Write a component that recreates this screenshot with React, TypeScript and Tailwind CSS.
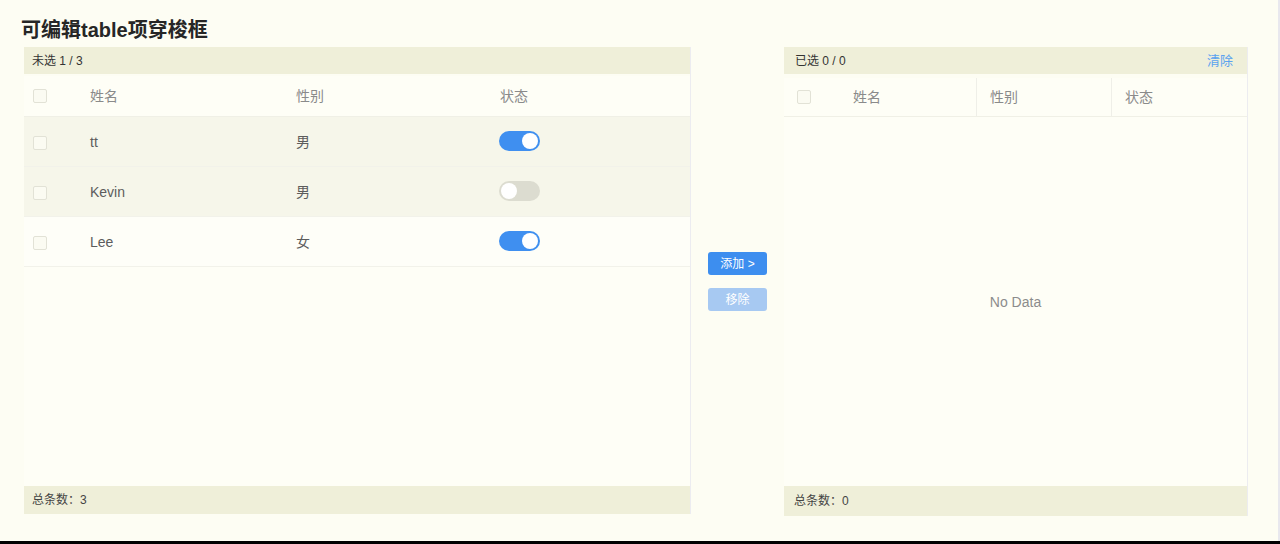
import { useState } from 'react'

type Row = { name: string; sex: string; on: boolean }

const font = { fontFamily: '"Liberation Sans", "Noto Sans CJK SC", sans-serif' }

function Switch({ on, onClick }: { on: boolean; onClick: () => void }) {
  return (
    <button
      onClick={onClick}
      className={`relative inline-flex h-[20px] w-[41px] items-center rounded-full ${on ? 'bg-[#3f8ff0]' : 'bg-[#dcdcd0]'}`}
    >
      <span
        className={`inline-block h-[16px] w-[16px] rounded-full bg-white ${on ? 'translate-x-[23px]' : 'translate-x-[2px]'}`}
      ></span>
    </button>
  )
}

function Checkbox() {
  return <span className="inline-block h-[14px] w-[14px] rounded-[2px] border border-[#e2e2d6] bg-[#fbfbf2]"></span>
}

export default function App() {
  const [rows, setRows] = useState<Row[]>([
    { name: 'tt', sex: '男', on: true },
    { name: 'Kevin', sex: '男', on: false },
    { name: 'Lee', sex: '女', on: true },
  ])

  const toggle = (i: number) => {
    setRows(rows.map((r, j) => (j === i ? { ...r, on: !r.on } : r)))
  }

  return (
    <div className="h-[544px] w-[1280px] overflow-hidden bg-[#fdfdf3] text-[#606060]" style={font}>
      <div className="flex h-[541px] flex-col border-r-2 border-[#e8e8ee]">
        {/* Title */}
        <h1 className="ml-[21px] mt-[18px] text-[20px] font-bold leading-[24px] text-[#262626]">可编辑table项穿梭框</h1>

        <div className="mt-[5px] flex">
          {/* Left panel */}
          <div className="ml-[24px] flex h-[467px] w-[667px] flex-col border-r border-[#ececf0]">
            <div className="flex h-[27px] items-center bg-[#efefd9] px-[8px] text-[12px] text-[#333]">未选 1 / 3</div>
            <div className="mt-[2px] flex-1 bg-[#fefef6]">
              <div className="flex h-[41px] items-center border-b border-[#f0f0e6] text-[14px] text-[#8a8a8a]">
                <div className="flex w-[41px] justify-end pr-[18px]"><Checkbox /></div>
                <div className="w-[207px] pl-[25px]">姓名</div>
                <div className="w-[204px] pl-[24px]">性别</div>
                <div className="pl-[24px]">状态</div>
              </div>
              {rows.map((r, i) => (
                <div
                  key={r.name}
                  className={`flex h-[50px] items-center border-b border-[#f2f2ea] pt-[2px] text-[14px] text-[#5c5c5c] ${i < 2 ? 'bg-[#f6f6ea]' : 'bg-[#fefef8]'}`}
                >
                  <div className="flex w-[41px] justify-end pr-[18px]"><Checkbox /></div>
                  <div className="w-[207px] pl-[25px]">{r.name}</div>
                  <div className="w-[204px] pl-[24px]">{r.sex}</div>
                  <div className="pl-[23px]">
                    <Switch on={r.on} onClick={() => toggle(i)} />
                  </div>
                </div>
              ))}
            </div>
            <div className="flex h-[28px] items-center bg-[#efefd9] px-[8px] text-[12px] text-[#444]">总条数：3</div>
          </div>

          {/* Buttons */}
          <div className="flex w-[93px] flex-col items-center justify-center gap-[13px]">
            <button className="h-[23px] w-[59px] rounded-[3px] bg-[#3d8eef] text-[12px] text-white">添加 &gt;</button>
            <button className="h-[23px] w-[59px] rounded-[3px] bg-[#a7c9f2] text-[12px] text-white">移除</button>
          </div>

          {/* Right panel */}
          <div className="flex h-[469px] w-[464px] flex-col border-r border-[#ececf0]">
            <div className="flex h-[27px] items-center justify-between bg-[#efefd9] pl-[11px] pr-[14px] text-[12px] text-[#333]">
              <span>已选 0 / 0</span>
              <span className="text-[13px] text-[#5aa2f0]">清除</span>
            </div>
            <div className="mt-[4px] flex flex-1 flex-col bg-[#fefef6]">
              <div className="flex h-[39px] items-center border-b border-[#f0f0e6] text-[14px] text-[#8a8a8a]">
                <div className="flex w-[46px] justify-start pl-[13px]"><Checkbox /></div>
                <div className="flex h-full w-[147px] items-center border-r border-[#efefe8] pl-[23px]">姓名</div>
                <div className="flex h-full w-[135px] items-center border-r border-[#efefe8] pl-[13px]">性别</div>
                <div className="pl-[13px]">状态</div>
              </div>
              <div className="flex flex-1 items-center justify-center pt-[2px] text-[14px] text-[#8c8c8c]">No Data</div>
            </div>
            <div className="flex h-[30px] items-center bg-[#efefd9] px-[10px] text-[12px] text-[#444]">总条数：0</div>
          </div>
        </div>
      </div>
      <div className="h-[3px] bg-black"></div>
    </div>
  )
}
